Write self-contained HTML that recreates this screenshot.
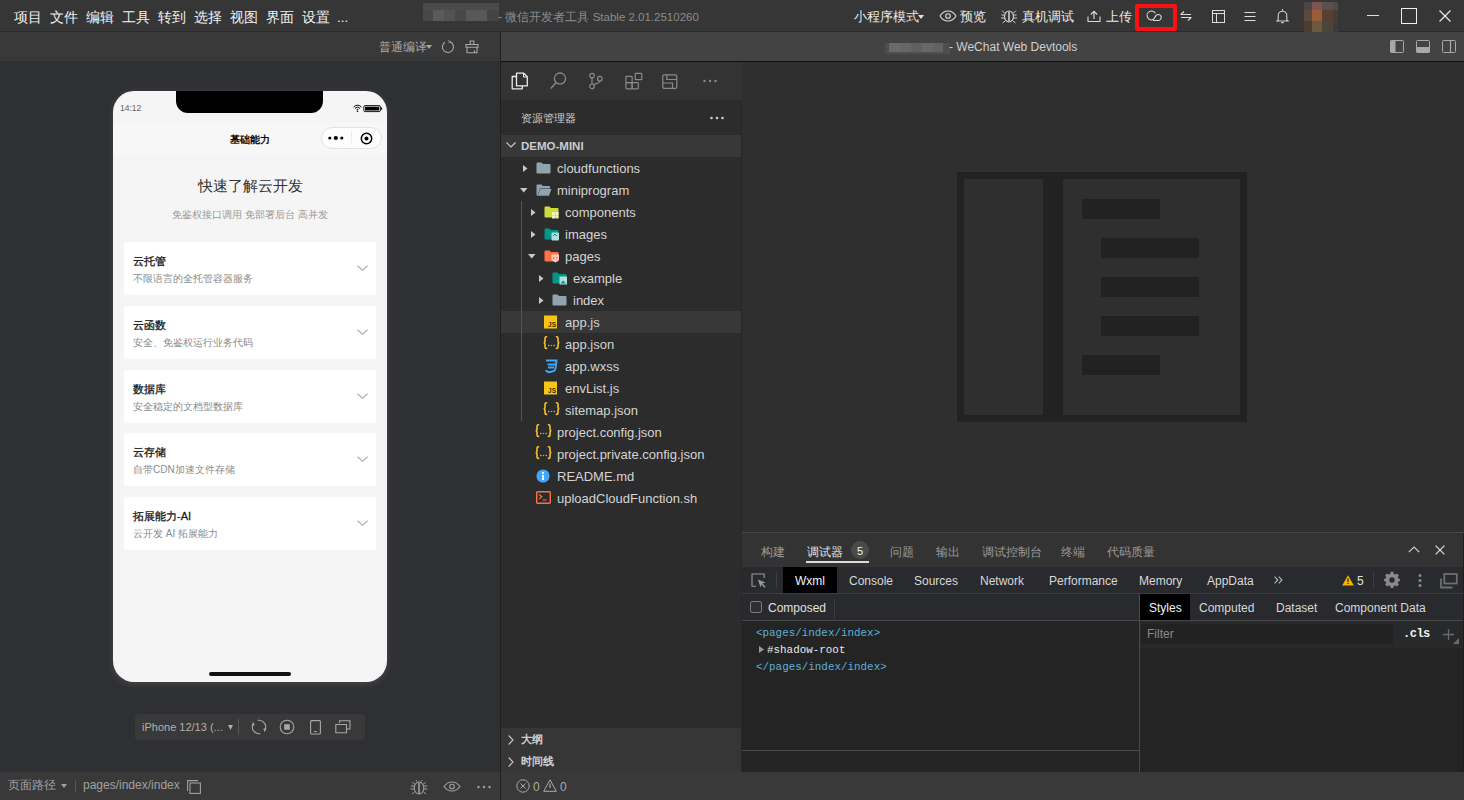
<!DOCTYPE html>
<html><head><meta charset="utf-8">
<style>
*{margin:0;padding:0;box-sizing:border-box}
html,body{width:1464px;height:800px;overflow:hidden;background:#2c2c2c;font-family:"Liberation Sans",sans-serif;color:#ccc}
.a{position:absolute}
.t{position:absolute;white-space:nowrap;line-height:1}
svg{position:absolute;overflow:visible}
</style></head><body>
<!-- TOP BAR -->
<div class="a" style="left:0;top:0;width:1464px;height:32px;background:#363636;border-bottom:1px solid #2a2a2a"></div>
<div class="t" style="left:14px;top:10.5px;font-size:13.5px;color:#f2f2f2">项目</div>
<div class="t" style="left:50px;top:10.5px;font-size:13.5px;color:#f2f2f2">文件</div>
<div class="t" style="left:86px;top:10.5px;font-size:13.5px;color:#f2f2f2">编辑</div>
<div class="t" style="left:122px;top:10.5px;font-size:13.5px;color:#f2f2f2">工具</div>
<div class="t" style="left:158px;top:10.5px;font-size:13.5px;color:#f2f2f2">转到</div>
<div class="t" style="left:194px;top:10.5px;font-size:13.5px;color:#f2f2f2">选择</div>
<div class="t" style="left:230px;top:10.5px;font-size:13.5px;color:#f2f2f2">视图</div>
<div class="t" style="left:266px;top:10.5px;font-size:13.5px;color:#f2f2f2">界面</div>
<div class="t" style="left:302px;top:10.5px;font-size:13.5px;color:#f2f2f2">设置</div>
<div class="t" style="left:337px;top:10.5px;font-size:13.5px;color:#f2f2f2">...</div>
<!-- blurred title -->
<div class="a" style="left:423px;top:3px;width:76px;height:7px;background:#4b4b4b"></div>
<div class="a" style="left:423px;top:10px;width:10px;height:11px;background:#444a4a"></div>
<div class="a" style="left:433px;top:10px;width:11px;height:11px;background:#5c5b58"></div>
<div class="a" style="left:444px;top:10px;width:11px;height:11px;background:#535353"></div>
<div class="a" style="left:455px;top:10px;width:11px;height:11px;background:#4a4846"></div>
<div class="a" style="left:466px;top:10px;width:21px;height:11px;background:#595857"></div>
<div class="a" style="left:487px;top:10px;width:12px;height:11px;background:#444444"></div>
<div class="t" style="left:498px;top:10.5px;font-size:12px;color:#8c8c8c">- 微信开发者工具 <span style="font-size:11.5px">Stable 2.01.2510260</span></div>
<!-- right tools -->
<div class="t" style="left:854px;top:10.5px;font-size:12.5px;color:#eaeaea">小程序模式</div>
<svg style="left:918px;top:15px" width="6" height="4"><path d="M0 0H6L3 4Z" fill="#e0e0e0"/></svg>
<svg style="left:939px;top:10px" width="18" height="12" viewBox="0 0 18 12"><path d="M1 6C3.5 2 6 1 9 1S14.5 2 17 6C14.5 10 12 11 9 11S3.5 10 1 6Z" fill="none" stroke="#dcdcdc" stroke-width="1.1"/><circle cx="9" cy="6" r="2.3" fill="none" stroke="#dcdcdc" stroke-width="1.1"/></svg>
<div class="t" style="left:960px;top:10.5px;font-size:12.5px;color:#eaeaea">预览</div>
<svg style="left:1000px;top:9px" width="18" height="14" viewBox="0 0 18 14"><ellipse cx="9" cy="7.5" rx="4.5" ry="5.5" fill="none" stroke="#d0d0d0" stroke-width="1.2"/><path d="M9 2.5V12.5" stroke="#d0d0d0" stroke-width="1.6"/><path d="M4.5 6H1.5M4.5 9H1M4.5 4L2 1.5M13.5 6H16.5M13.5 9H17M13.5 4L16 1.5M5 12L2.5 14M13 12L15.5 14" stroke="#d0d0d0" stroke-width="1"/></svg>
<div class="t" style="left:1022px;top:10.5px;font-size:12.5px;color:#eaeaea">真机调试</div>
<svg style="left:1087px;top:10px" width="14" height="13" viewBox="0 0 14 13"><path d="M1 6.5V11.5H13V6.5" fill="none" stroke="#d8d8d8" stroke-width="1.1"/><path d="M7 9V1.5M3.8 4.5L7 1.3L10.2 4.5" fill="none" stroke="#d8d8d8" stroke-width="1.2"/></svg>
<div class="t" style="left:1106px;top:10.5px;font-size:12.5px;color:#eaeaea">上传</div>
<div class="a" style="left:1135px;top:4px;width:42px;height:27px;border:4px solid #ff0f0f;border-radius:2px"></div>
<svg style="left:1146px;top:10px" width="17" height="12" viewBox="0 0 17 12"><path d="M9.3 3.3A4.4 4.4 0 1 0 7.6 9.3L9.9 5.6A3 3 0 1 1 12 10.5H7.2" fill="none" stroke="#dcdcdc" stroke-width="1.1"/></svg>
<svg style="left:1180px;top:11px" width="12" height="10" viewBox="0 0 12 10"><path d="M0.5 3.5H11M4 0.5L0.8 3.5M11.5 6.5H1M8 9.5L11.2 6.5" fill="none" stroke="#dcdcdc" stroke-width="1.1"/></svg>
<svg style="left:1212px;top:10px" width="13" height="13" viewBox="0 0 13 13"><rect x="0.5" y="0.5" width="12" height="12" fill="none" stroke="#dcdcdc" stroke-width="1"/><path d="M0.5 3.5H12.5M4.5 3.5V12.5" stroke="#dcdcdc" stroke-width="1"/></svg>
<svg style="left:1244px;top:11px" width="12" height="11" viewBox="0 0 12 11"><path d="M0.5 1.5H11.5M0.5 5.5H11.5M0.5 9.5H11.5" stroke="#dcdcdc" stroke-width="1"/></svg>
<svg style="left:1276px;top:8px" width="13" height="16" viewBox="0 0 13 16"><path d="M6.5 1V2.5M2.2 12V7.5A4.3 4.3 0 0 1 10.8 7.5V12L12 13H1L2.2 12Z" fill="none" stroke="#d0d0d0" stroke-width="1.1"/><path d="M5.3 14.6H7.7" stroke="#d0d0d0" stroke-width="1.3"/></svg>
<!-- avatar pixelated -->
<div class="a" style="left:1304px;top:2px;width:34px;height:30px;display:grid;grid-template-columns:8px 10px 11px 5px;grid-template-rows:8px 11px 11px">
<i style="background:#4a4544"></i><i style="background:#7e5450"></i><i style="background:#5a504f"></i><i style="background:#4d4b4b"></i>
<i style="background:#5a4a3a"></i><i style="background:#9a5c3a"></i><i style="background:#5a3e30"></i><i style="background:#433d38"></i>
<i style="background:#4a3c32"></i><i style="background:#6c5a40"></i><i style="background:#4b4538"></i><i style="background:#3b3b3b"></i>
</div>
<div class="a" style="left:1367px;top:15px;width:12px;height:1px;background:#e0e0e0"></div>
<div class="a" style="left:1401px;top:8px;width:16px;height:16px;border:1.5px solid #f0f0f0"></div>
<svg style="left:1439px;top:10px" width="12" height="12" viewBox="0 0 12 12"><path d="M0.5 0.5L11.5 11.5M11.5 0.5L0.5 11.5" stroke="#e8e8e8" stroke-width="1.2"/></svg>
<!-- LEFT SIM PANEL -->
<div class="a" style="left:0;top:32px;width:500px;height:29px;background:#393939"></div>
<div class="a" style="left:0;top:61px;width:500px;height:711px;background:#2f3033"></div>
<div class="a" style="left:0;top:772px;width:500px;height:28px;background:#393939"></div>
<div class="a" style="left:500px;top:32px;width:1px;height:768px;background:#1f1f1f"></div>
<div class="t" style="left:378.5px;top:41.5px;font-size:11.5px;color:#a8a8a8">普通编译</div>
<svg style="left:426px;top:45px" width="6" height="4"><path d="M0 0H6L3 4Z" fill="#a8a8a8"/></svg>
<svg style="left:441px;top:40px" width="14" height="14" viewBox="0 0 14 14"><path d="M8.6 1.6A5.6 5.6 0 1 1 4 2.2" fill="none" stroke="#a8a8a8" stroke-width="1.1"/><path d="M7.3 0.2L8.8 1.6L7.4 3" fill="none" stroke="#a8a8a8" stroke-width="1"/></svg>
<svg style="left:465px;top:40px" width="14" height="14" viewBox="0 0 14 14"><path d="M5.2 4.5V1H8.8V4.5M1 4.5H13V7.3H1ZM2 7.3V12.8H12V7.3M9.5 10.5V12.8" fill="none" stroke="#a8a8a8" stroke-width="1.1"/></svg>
<!-- PHONE -->
<div class="a" style="left:113px;top:91px;width:274px;height:591px;background:#f5f5f5;border-radius:21px;box-shadow:0 2px 7px rgba(160,160,160,0.22);overflow:hidden">
 <div class="a" style="left:63px;top:0;width:147px;height:22px;background:#000;border-radius:0 0 12px 12px"></div>
 <div class="t" style="left:7px;top:13px;font-size:8.5px;color:#666">14:12</div>
 <svg style="left:240px;top:14px" width="30" height="7" viewBox="0 0 30 7"><path d="M0.5 2.2A5 5 0 0 1 8.5 2.2M2 3.6A3 3 0 0 1 7 3.6M3.4 5A1.3 1.3 0 0 1 5.6 5" fill="none" stroke="#000" stroke-width="1"/><circle cx="4.5" cy="6.2" r="0.8" fill="#000"/><rect x="10.8" y="0.6" width="16.6" height="6" rx="1.3" fill="none" stroke="#000" stroke-width="0.9"/><rect x="12" y="1.7" width="14.2" height="3.8" fill="#000"/><rect x="27.8" y="2.5" width="1.3" height="2.2" fill="#000"/></svg>
 <div class="a" style="left:0;top:32px;width:274px;height:31px;background:#f7f7f7"></div>
 <div class="t" style="left:0;top:44px;width:274px;text-align:center;font-size:9.5px;color:#000;-webkit-text-stroke:0.35px #000">基础能力</div>
 <div class="a" style="left:208px;top:36px;width:61px;height:22px;border:1px solid #e3e3e3;border-radius:11px;background:#fdfdfd"></div>
 <svg style="left:215px;top:44px" width="16" height="6" viewBox="0 0 16 6"><circle cx="1.8" cy="3" r="1.6" fill="#000"/><circle cx="7.8" cy="3" r="2.1" fill="#000"/><circle cx="13.8" cy="3" r="1.6" fill="#000"/></svg>
 <div class="a" style="left:238px;top:40px;width:1px;height:14px;background:#eeeeee"></div>
 <svg style="left:247px;top:41px" width="13" height="13" viewBox="0 0 13 13"><circle cx="6.5" cy="6.5" r="5.2" fill="none" stroke="#000" stroke-width="1.5"/><circle cx="6.5" cy="6.5" r="2" fill="#000"/></svg>
 <div class="t" style="left:0;top:87px;width:274px;text-align:center;font-size:15px;color:#333">快速了解云开发</div>
 <div class="t" style="left:0;top:119px;width:274px;text-align:center;font-size:10px;color:#999">免鉴权接口调用 免部署后台 高并发</div>
 <div class="a" style="left:11px;top:151px;width:252px;height:53px;background:#fff;border-radius:3px">
  <div class="t" style="left:9px;top:13.5px;font-size:11px;color:#1a1a1a;-webkit-text-stroke:0.3px #1a1a1a">云托管</div>
  <div class="t" style="left:9px;top:32px;font-size:10px;color:#8a8a8a">不限语言的全托管容器服务</div>
  <svg style="left:233px;top:23px" width="11" height="6" viewBox="0 0 11 6"><path d="M0.5 0.8L5.5 5.3L10.5 0.8" fill="none" stroke="#b0b0b0" stroke-width="1.2"/></svg>
 </div>
 <div class="a" style="left:11px;top:215px;width:252px;height:53px;background:#fff;border-radius:3px">
  <div class="t" style="left:9px;top:13.5px;font-size:11px;color:#1a1a1a;-webkit-text-stroke:0.3px #1a1a1a">云函数</div>
  <div class="t" style="left:9px;top:32px;font-size:10px;color:#8a8a8a">安全、免鉴权运行业务代码</div>
  <svg style="left:233px;top:23px" width="11" height="6" viewBox="0 0 11 6"><path d="M0.5 0.8L5.5 5.3L10.5 0.8" fill="none" stroke="#b0b0b0" stroke-width="1.2"/></svg>
 </div>
 <div class="a" style="left:11px;top:279px;width:252px;height:53px;background:#fff;border-radius:3px">
  <div class="t" style="left:9px;top:13.5px;font-size:11px;color:#1a1a1a;-webkit-text-stroke:0.3px #1a1a1a">数据库</div>
  <div class="t" style="left:9px;top:32px;font-size:10px;color:#8a8a8a">安全稳定的文档型数据库</div>
  <svg style="left:233px;top:23px" width="11" height="6" viewBox="0 0 11 6"><path d="M0.5 0.8L5.5 5.3L10.5 0.8" fill="none" stroke="#b0b0b0" stroke-width="1.2"/></svg>
 </div>
 <div class="a" style="left:11px;top:342px;width:252px;height:53px;background:#fff;border-radius:3px">
  <div class="t" style="left:9px;top:13.5px;font-size:11px;color:#1a1a1a;-webkit-text-stroke:0.3px #1a1a1a">云存储</div>
  <div class="t" style="left:9px;top:32px;font-size:10px;color:#8a8a8a">自带CDN加速文件存储</div>
  <svg style="left:233px;top:23px" width="11" height="6" viewBox="0 0 11 6"><path d="M0.5 0.8L5.5 5.3L10.5 0.8" fill="none" stroke="#b0b0b0" stroke-width="1.2"/></svg>
 </div>
 <div class="a" style="left:11px;top:406px;width:252px;height:53px;background:#fff;border-radius:3px">
  <div class="t" style="left:9px;top:13.5px;font-size:11px;color:#1a1a1a;-webkit-text-stroke:0.3px #1a1a1a">拓展能力-AI</div>
  <div class="t" style="left:9px;top:32px;font-size:10px;color:#8a8a8a">云开发 AI 拓展能力</div>
  <svg style="left:233px;top:23px" width="11" height="6" viewBox="0 0 11 6"><path d="M0.5 0.8L5.5 5.3L10.5 0.8" fill="none" stroke="#b0b0b0" stroke-width="1.2"/></svg>
 </div>
 <div class="a" style="left:96px;top:581px;width:82px;height:4px;background:#111;border-radius:2px"></div>
</div>
<!-- device toolbar -->
<div class="a" style="left:135px;top:714px;width:230px;height:26px;background:#393939;border-radius:3px"></div>
<div class="t" style="left:142px;top:722px;font-size:11px;color:#b0b0b0">iPhone 12/13 (...</div>
<svg style="left:228px;top:725px" width="5" height="5"><path d="M0 0H5L2.5 5Z" fill="#b0b0b0"/></svg>
<div class="a" style="left:238px;top:719px;width:1px;height:16px;background:#555"></div>
<svg style="left:252px;top:720px" width="15" height="15" viewBox="0 0 15 15"><path d="M5.84 0.4A6.7 6.7 0 0 1 13.2 9.5M8.16 13.6A6.7 6.7 0 0 1 0.8 4.5" fill="none" stroke="#a8a8a8" stroke-width="1.1"/><path d="M11.3 8.6H14.4L12.7 12.2ZM2.7 5.4H-0.4L1.3 1.8Z" fill="#a8a8a8"/></svg>
<svg style="left:279px;top:719px" width="16" height="16" viewBox="0 0 16 16"><circle cx="8" cy="8" r="6.8" fill="none" stroke="#a8a8a8" stroke-width="1.1"/><rect x="5.2" y="5.2" width="5.6" height="5.6" rx="0.5" fill="#a8a8a8"/></svg>
<svg style="left:310px;top:720px" width="11" height="15" viewBox="0 0 11 15"><rect x="0.6" y="0.6" width="9.8" height="13.4" rx="1" fill="none" stroke="#a8a8a8" stroke-width="1.1"/><path d="M4 11.5H7" stroke="#a8a8a8" stroke-width="1"/></svg>
<svg style="left:335px;top:720px" width="16" height="14" viewBox="0 0 16 14"><path d="M4.5 3V0.8H15V9H12M0.8 4.5H11.5V12.8H0.8Z" fill="none" stroke="#a8a8a8" stroke-width="1.1"/></svg>
<!-- status bar left -->
<div class="t" style="left:8px;top:779px;font-size:12px;color:#a0a0a0">页面路径</div>
<svg style="left:61px;top:784px" width="6" height="4"><path d="M0 0H6L3 4Z" fill="#a0a0a0"/></svg>
<div class="a" style="left:75px;top:780px;width:1px;height:12px;background:#555"></div>
<div class="t" style="left:83px;top:779px;font-size:12px;color:#a0a0a0">pages/index/index</div>
<svg style="left:187px;top:780px" width="14" height="14" viewBox="0 0 14 14"><path d="M0.6 11V0.6H11" fill="none" stroke="#a0a0a0" stroke-width="1.1"/><rect x="3" y="3" width="10.4" height="10.4" fill="none" stroke="#a0a0a0" stroke-width="1.1"/></svg>
<svg style="left:410px;top:779px" width="18" height="16" viewBox="0 0 18 16"><ellipse cx="9" cy="9" rx="4.8" ry="6" fill="none" stroke="#a0a0a0" stroke-width="1.1"/><path d="M9 3.5V15" stroke="#a0a0a0" stroke-width="1.6"/><path d="M7 2.5L6 1M11 2.5L12 1M4.2 7H1M4.2 10H0.5M4.5 13L2 15M13.8 7H17M13.8 10H17.5M13.5 13L16 15M4.7 5L2.5 3.5M13.3 5L15.5 3.5" stroke="#a0a0a0" stroke-width="1"/></svg>
<svg style="left:443px;top:781px" width="18" height="11" viewBox="0 0 18 11"><path d="M1 5.5C3.5 2 6 1 9 1S14.5 2 17 5.5C14.5 9 12 10 9 10S3.5 9 1 5.5Z" fill="none" stroke="#a0a0a0" stroke-width="1.1"/><circle cx="9" cy="5.5" r="2.3" fill="none" stroke="#a0a0a0" stroke-width="1.1"/></svg>
<svg style="left:477px;top:785px" width="14" height="4" viewBox="0 0 14 4"><circle cx="1.5" cy="2" r="1.2" fill="#a0a0a0"/><circle cx="7" cy="2" r="1.2" fill="#a0a0a0"/><circle cx="12.5" cy="2" r="1.2" fill="#a0a0a0"/></svg>
<!-- RIGHT -->
<div class="a" style="left:501px;top:32px;width:963px;height:29px;background:#434343"></div>
<div class="a" style="left:501px;top:61px;width:963px;height:1px;background:#111111"></div>
<div class="a" style="left:885px;top:43px;width:65px;height:11px;background:#4e4e4e"></div>
<div class="a" style="left:889px;top:43px;width:11px;height:9px;background:#6a6a6a"></div>
<div class="a" style="left:900px;top:43px;width:11px;height:9px;background:#666666"></div>
<div class="a" style="left:911px;top:43px;width:11px;height:9px;background:#606060"></div>
<div class="a" style="left:922px;top:43px;width:11px;height:9px;background:#676767"></div>
<div class="a" style="left:933px;top:43px;width:10px;height:9px;background:#626262"></div>
<div class="t" style="left:949px;top:41px;font-size:12px;color:#d0d0d0">- WeChat Web Devtools</div>
<svg style="left:1390px;top:40px" width="14" height="13" viewBox="0 0 14 13"><rect x="0.5" y="0.5" width="13" height="12" rx="1" fill="none" stroke="#a8a8a8" stroke-width="1"/><rect x="0.5" y="0.5" width="5" height="12" fill="#a8a8a8"/></svg>
<svg style="left:1416px;top:40px" width="14" height="13" viewBox="0 0 14 13"><rect x="0.5" y="0.5" width="13" height="12" rx="1" fill="none" stroke="#a8a8a8" stroke-width="1"/><rect x="0.5" y="7" width="13" height="5.5" fill="#a8a8a8"/></svg>
<svg style="left:1442px;top:40px" width="14" height="13" viewBox="0 0 14 13"><rect x="0.5" y="0.5" width="13" height="12" rx="1" fill="none" stroke="#a8a8a8" stroke-width="1"/><path d="M8.5 0.5V12.5" stroke="#a8a8a8" stroke-width="1.2"/></svg>

<!-- activity bar -->
<div class="a" style="left:501px;top:62px;width:241px;height:38px;background:#333333"></div>
<svg style="left:511px;top:72px" width="18" height="18" viewBox="0 0 18 18"><path d="M5.5 4.5H1.2V16.8H11.3V13.8" fill="none" stroke="#ececec" stroke-width="1.3" stroke-linejoin="round"/><path d="M5.5 1.2H12.8L16.3 4.7V13.8H5.5Z" fill="none" stroke="#ececec" stroke-width="1.3" stroke-linejoin="round"/><path d="M12.5 1.5V5H16" fill="none" stroke="#ececec" stroke-width="1"/></svg>
<svg style="left:550px;top:72px" width="17" height="18" viewBox="0 0 17 18"><circle cx="10" cy="6.6" r="5.6" fill="none" stroke="#8a8a8a" stroke-width="1.3"/><path d="M6 10.8L0.8 16.5" stroke="#8a8a8a" stroke-width="1.4"/></svg>
<svg style="left:588px;top:72px" width="16" height="18" viewBox="0 0 16 18"><circle cx="4" cy="3.6" r="2.3" fill="none" stroke="#8a8a8a" stroke-width="1.2"/><circle cx="4" cy="14.3" r="2.3" fill="none" stroke="#8a8a8a" stroke-width="1.2"/><circle cx="11.8" cy="6.7" r="2.3" fill="none" stroke="#8a8a8a" stroke-width="1.2"/><path d="M4 5.9V12M11.8 9C11.8 11 9 11.5 5.5 12.5" fill="none" stroke="#8a8a8a" stroke-width="1.2"/></svg>
<svg style="left:625px;top:72px" width="18" height="18" viewBox="0 0 18 18"><rect x="0.9" y="4.4" width="6.2" height="6.2" rx="0.8" fill="none" stroke="#8a8a8a" stroke-width="1.2"/><rect x="0.9" y="10.6" width="6.2" height="6.2" rx="0.8" fill="none" stroke="#8a8a8a" stroke-width="1.2"/><rect x="7.1" y="10.6" width="6.2" height="6.2" rx="0.8" fill="none" stroke="#8a8a8a" stroke-width="1.2"/><rect x="10.2" y="1.3" width="6.6" height="6.4" rx="0.8" fill="none" stroke="#8a8a8a" stroke-width="1.2"/></svg>
<svg style="left:662px;top:74px" width="16" height="16" viewBox="0 0 16 16"><rect x="0.8" y="0.8" width="14" height="13.6" rx="1.5" fill="none" stroke="#8a8a8a" stroke-width="1.2"/><path d="M4.8 1V5.5H14.8M0.8 9H10.5V14.4" fill="none" stroke="#8a8a8a" stroke-width="1.2"/></svg>
<svg style="left:703px;top:79px" width="14" height="4" viewBox="0 0 14 4"><circle cx="1.5" cy="2" r="1.2" fill="#8a8a8a"/><circle cx="7" cy="2" r="1.2" fill="#8a8a8a"/><circle cx="12.5" cy="2" r="1.2" fill="#8a8a8a"/></svg>

<!-- explorer -->
<div class="a" style="left:501px;top:100px;width:240px;height:628px;background:#2c2c2c"></div>
<div class="t" style="left:521px;top:113px;font-size:11px;color:#cfcfcf">资源管理器</div>
<svg style="left:710px;top:116px" width="14" height="4" viewBox="0 0 14 4"><circle cx="1.5" cy="2" r="1.3" fill="#cfcfcf"/><circle cx="7" cy="2" r="1.3" fill="#cfcfcf"/><circle cx="12.5" cy="2" r="1.3" fill="#cfcfcf"/></svg>
<div class="a" style="left:501px;top:135px;width:240px;height:22px;background:#383838"></div>
<svg style="left:506px;top:142px" width="10" height="6" viewBox="0 0 10 6"><path d="M0.5 0.5L5 5L9.5 0.5" fill="none" stroke="#c8c8c8" stroke-width="1.2"/></svg>
<div class="t" style="left:521px;top:141px;font-size:11.5px;color:#cccccc;font-weight:bold">DEMO-MINI</div>
<div class="a" style="left:501px;top:311px;width:240px;height:22px;background:#383838"></div>
<div class="a" style="left:521px;top:201px;width:1px;height:220px;background:#555"></div>
<svg style="left:523px;top:165px" width="5" height="8"><path d="M0 0V7L4.5 3.5Z" fill="#c8c8c8"/></svg><svg style="left:536px;top:162px" width="16" height="13" viewBox="0 0 16 13"><path d="M0.5 1.5Q0.5 0.5 1.5 0.5H5.5L7 2H13.5Q14.5 2 14.5 3V10.5Q14.5 11.5 13.5 11.5H1.5Q0.5 11.5 0.5 10.5Z" fill="#90a4ae"/></svg><div class="t" style="left:557px;top:162px;font-size:13px;color:#d4d4d4">cloudfunctions</div><svg style="left:520px;top:188px" width="8" height="5"><path d="M0 0H7.5L3.75 4.5Z" fill="#c8c8c8"/></svg><svg style="left:536px;top:184px" width="16" height="13" viewBox="0 0 16 13"><path d="M0.5 1.5Q0.5 0.5 1.5 0.5H5.5L7 2H13Q14 2 14 3V4.5H4L1.5 11.5H0.5Z" fill="#90a4ae"/><path d="M4.3 5H15.5L13 11.8H1.6Z" fill="#90a4ae"/></svg><div class="t" style="left:557px;top:184px;font-size:13px;color:#d4d4d4">miniprogram</div><svg style="left:531px;top:209px" width="5" height="8"><path d="M0 0V7L4.5 3.5Z" fill="#c8c8c8"/></svg><svg style="left:544px;top:206px" width="16" height="13" viewBox="0 0 16 13"><path d="M0.5 1.5Q0.5 0.5 1.5 0.5H5.5L7 2H13.5Q14.5 2 14.5 3V10.5Q14.5 11.5 13.5 11.5H1.5Q0.5 11.5 0.5 10.5Z" fill="#cddc39"/><rect x="8" y="6" width="3" height="3" fill="#f0f4c3"/><rect x="11.5" y="6" width="3" height="3" fill="#f0f4c3"/><rect x="8" y="9.5" width="3" height="3" fill="#f0f4c3"/><rect x="11.5" y="9.5" width="3" height="3" fill="#f0f4c3"/></svg><div class="t" style="left:565px;top:206px;font-size:13px;color:#d4d4d4">components</div><svg style="left:531px;top:231px" width="5" height="8"><path d="M0 0V7L4.5 3.5Z" fill="#c8c8c8"/></svg><svg style="left:544px;top:228px" width="16" height="13" viewBox="0 0 16 13"><path d="M0.5 1.5Q0.5 0.5 1.5 0.5H5.5L7 2H13.5Q14.5 2 14.5 3V10.5Q14.5 11.5 13.5 11.5H1.5Q0.5 11.5 0.5 10.5Z" fill="#009688"/><rect x="7.5" y="4.5" width="7.5" height="8" rx="1" fill="#b2dfdb"/><path d="M9 8L11 6L13 8" stroke="#009688" stroke-width="1" fill="none"/></svg><div class="t" style="left:565px;top:228px;font-size:13px;color:#d4d4d4">images</div><svg style="left:528px;top:254px" width="8" height="5"><path d="M0 0H7.5L3.75 4.5Z" fill="#c8c8c8"/></svg><svg style="left:544px;top:250px" width="16" height="13" viewBox="0 0 16 13"><path d="M0.5 1.5Q0.5 0.5 1.5 0.5H5.5L7 2H13.5Q14.5 2 14.5 3V10.5Q14.5 11.5 13.5 11.5H1.5Q0.5 11.5 0.5 10.5Z" fill="#ff7043"/><path d="M7.5 4.5H15V10L11.25 12.5L7.5 10Z" fill="#ffccbc"/><path d="M10.3 6.8L9.2 8L10.3 9.2M12.2 6.8L13.3 8L12.2 9.2" stroke="#ff5722" stroke-width="0.9" fill="none"/></svg><div class="t" style="left:565px;top:250px;font-size:13px;color:#d4d4d4">pages</div><svg style="left:539px;top:275px" width="5" height="8"><path d="M0 0V7L4.5 3.5Z" fill="#c8c8c8"/></svg><svg style="left:552px;top:272px" width="16" height="13" viewBox="0 0 16 13"><path d="M0.5 1.5Q0.5 0.5 1.5 0.5H5.5L7 2H13.5Q14.5 2 14.5 3V10.5Q14.5 11.5 13.5 11.5H1.5Q0.5 11.5 0.5 10.5Z" fill="#009688"/><rect x="7.5" y="4.5" width="7.5" height="8" fill="#b2dfdb"/><path d="M8.5 11.5L11 8.5L14 11.5Z" fill="#009688"/></svg><div class="t" style="left:573px;top:272px;font-size:13px;color:#d4d4d4">example</div><svg style="left:539px;top:297px" width="5" height="8"><path d="M0 0V7L4.5 3.5Z" fill="#c8c8c8"/></svg><svg style="left:552px;top:294px" width="16" height="13" viewBox="0 0 16 13"><path d="M0.5 1.5Q0.5 0.5 1.5 0.5H5.5L7 2H13.5Q14.5 2 14.5 3V10.5Q14.5 11.5 13.5 11.5H1.5Q0.5 11.5 0.5 10.5Z" fill="#90a4ae"/></svg><div class="t" style="left:573px;top:294px;font-size:13px;color:#d4d4d4">index</div><svg style="left:544px;top:315px" width="14" height="14" viewBox="0 0 14 14"><rect x="0" y="0.5" width="13" height="13" fill="#f5c518"/><text x="12" y="12" font-family="Liberation Sans" font-size="6.5" font-weight="bold" fill="#3a3000" text-anchor="end">JS</text></svg><div class="t" style="left:565px;top:316px;font-size:13px;color:#d4d4d4">app.js</div><svg style="left:543px;top:336px" width="17" height="14" viewBox="0 0 17 14"><path d="M4.2 0.8H3.4Q2 0.8 2 2.2V5.2Q2 6.6 0.6 6.6Q2 6.6 2 8V11Q2 12.4 3.4 12.4H4.2M12.8 0.8H13.6Q15 0.8 15 2.2V5.2Q15 6.6 16.4 6.6Q15 6.6 15 8V11Q15 12.4 13.6 12.4H12.8" fill="none" stroke="#f9c12e" stroke-width="1.6"/><circle cx="5.8" cy="9.4" r="0.75" fill="#f9c12e"/><circle cx="8.5" cy="9.4" r="0.75" fill="#d9a52a"/><circle cx="11.2" cy="9.4" r="0.75" fill="#f9c12e"/></svg><div class="t" style="left:565px;top:338px;font-size:13px;color:#d4d4d4">app.json</div><svg style="left:544px;top:359px" width="14" height="14" viewBox="0 0 14 14"><path d="M2 1.5H12.5L11.5 9.5Q11.3 11.5 9 12.3L5 13.2Q2.5 12.8 2 11" fill="none" stroke="#42a5f5" stroke-width="2"/><path d="M3.5 5.5H11M4 8.5H10" stroke="#42a5f5" stroke-width="1.8"/></svg><div class="t" style="left:565px;top:360px;font-size:13px;color:#d4d4d4">app.wxss</div><svg style="left:544px;top:381px" width="14" height="14" viewBox="0 0 14 14"><rect x="0" y="0.5" width="13" height="13" fill="#f5c518"/><text x="12" y="12" font-family="Liberation Sans" font-size="6.5" font-weight="bold" fill="#3a3000" text-anchor="end">JS</text></svg><div class="t" style="left:565px;top:382px;font-size:13px;color:#d4d4d4">envList.js</div><svg style="left:543px;top:402px" width="17" height="14" viewBox="0 0 17 14"><path d="M4.2 0.8H3.4Q2 0.8 2 2.2V5.2Q2 6.6 0.6 6.6Q2 6.6 2 8V11Q2 12.4 3.4 12.4H4.2M12.8 0.8H13.6Q15 0.8 15 2.2V5.2Q15 6.6 16.4 6.6Q15 6.6 15 8V11Q15 12.4 13.6 12.4H12.8" fill="none" stroke="#f9c12e" stroke-width="1.6"/><circle cx="5.8" cy="9.4" r="0.75" fill="#f9c12e"/><circle cx="8.5" cy="9.4" r="0.75" fill="#d9a52a"/><circle cx="11.2" cy="9.4" r="0.75" fill="#f9c12e"/></svg><div class="t" style="left:565px;top:404px;font-size:13px;color:#d4d4d4">sitemap.json</div><svg style="left:535px;top:424px" width="17" height="14" viewBox="0 0 17 14"><path d="M4.2 0.8H3.4Q2 0.8 2 2.2V5.2Q2 6.6 0.6 6.6Q2 6.6 2 8V11Q2 12.4 3.4 12.4H4.2M12.8 0.8H13.6Q15 0.8 15 2.2V5.2Q15 6.6 16.4 6.6Q15 6.6 15 8V11Q15 12.4 13.6 12.4H12.8" fill="none" stroke="#f9c12e" stroke-width="1.6"/><circle cx="5.8" cy="9.4" r="0.75" fill="#f9c12e"/><circle cx="8.5" cy="9.4" r="0.75" fill="#d9a52a"/><circle cx="11.2" cy="9.4" r="0.75" fill="#f9c12e"/></svg><div class="t" style="left:557px;top:426px;font-size:13px;color:#d4d4d4">project.config.json</div><svg style="left:535px;top:446px" width="17" height="14" viewBox="0 0 17 14"><path d="M4.2 0.8H3.4Q2 0.8 2 2.2V5.2Q2 6.6 0.6 6.6Q2 6.6 2 8V11Q2 12.4 3.4 12.4H4.2M12.8 0.8H13.6Q15 0.8 15 2.2V5.2Q15 6.6 16.4 6.6Q15 6.6 15 8V11Q15 12.4 13.6 12.4H12.8" fill="none" stroke="#f9c12e" stroke-width="1.6"/><circle cx="5.8" cy="9.4" r="0.75" fill="#f9c12e"/><circle cx="8.5" cy="9.4" r="0.75" fill="#d9a52a"/><circle cx="11.2" cy="9.4" r="0.75" fill="#f9c12e"/></svg><div class="t" style="left:557px;top:448px;font-size:13px;color:#d4d4d4">project.private.config.json</div><svg style="left:536px;top:469px" width="14" height="14" viewBox="0 0 14 14"><circle cx="7" cy="7" r="6.6" fill="#42a5f5"/><rect x="6.1" y="6" width="1.8" height="5" fill="#fff"/><circle cx="7" cy="3.9" r="1.05" fill="#fff"/></svg><div class="t" style="left:557px;top:470px;font-size:13px;color:#d4d4d4">README.md</div><svg style="left:536px;top:491px" width="15" height="13" viewBox="0 0 15 13"><rect x="0.7" y="0.7" width="13.6" height="11.6" rx="1" fill="none" stroke="#ff7043" stroke-width="1.4"/><path d="M3 3.5L5.8 5.8L3 8.1M6.5 9H10.5" fill="none" stroke="#ff7043" stroke-width="1.2"/></svg><div class="t" style="left:557px;top:492px;font-size:13px;color:#d4d4d4">uploadCloudFunction.sh</div>
<div class="a" style="left:501px;top:728px;width:240px;height:44px;background:#363636"></div>
<svg style="left:508px;top:735px" width="6" height="10" viewBox="0 0 6 10"><path d="M0.7 0.5L5 5L0.7 9.5" fill="none" stroke="#c8c8c8" stroke-width="1.1"/></svg>
<div class="t" style="left:521px;top:734px;font-size:11px;color:#d0d0d0;font-weight:bold">大纲</div>
<svg style="left:508px;top:757px" width="6" height="10" viewBox="0 0 6 10"><path d="M0.7 0.5L5 5L0.7 9.5" fill="none" stroke="#c8c8c8" stroke-width="1.1"/></svg>
<div class="t" style="left:521px;top:756px;font-size:11px;color:#d0d0d0;font-weight:bold">时间线</div>
<div class="a" style="left:501px;top:772px;width:963px;height:28px;background:#393939"></div>
<!-- right status -->
<svg style="left:516px;top:779px" width="14" height="14" viewBox="0 0 14 14"><circle cx="7" cy="7" r="6.2" fill="none" stroke="#aaa" stroke-width="1"/><path d="M4.5 4.5L9.5 9.5M9.5 4.5L4.5 9.5" stroke="#aaa" stroke-width="1"/></svg>
<div class="t" style="left:533px;top:781px;font-size:12px;color:#aaa">0</div>
<svg style="left:543px;top:779px" width="14" height="13" viewBox="0 0 14 13"><path d="M7 0.8L13.3 12.3H0.7Z" fill="none" stroke="#aaa" stroke-width="1"/><path d="M7 4.5V9" stroke="#aaa" stroke-width="1.2"/></svg>
<div class="t" style="left:560px;top:781px;font-size:12px;color:#aaa">0</div>

<!-- editor -->
<div class="a" style="left:741px;top:100px;width:1px;height:672px;background:#272727"></div>
<div class="a" style="left:742px;top:62px;width:722px;height:470px;background:#2f2f2f"></div>
<div class="a" style="left:742px;top:532px;width:722px;height:1px;background:#474747"></div>
<div class="a" style="left:957px;top:172px;width:290px;height:250px;background:#222"></div>
<div class="a" style="left:964px;top:179px;width:79px;height:236px;background:#2f2f2f"></div>
<div class="a" style="left:1063px;top:179px;width:177px;height:236px;background:#2f2f2f"></div>
<div class="a" style="left:1082px;top:199px;width:78px;height:20px;background:#222"></div>
<div class="a" style="left:1101px;top:238px;width:98px;height:20px;background:#222"></div>
<div class="a" style="left:1101px;top:277px;width:98px;height:20px;background:#222"></div>
<div class="a" style="left:1101px;top:316px;width:98px;height:20px;background:#222"></div>
<div class="a" style="left:1082px;top:355px;width:78px;height:20px;background:#222"></div>
<!-- DEVTOOLS -->
<div class="a" style="left:742px;top:533px;width:722px;height:34px;background:#333333"></div>
<div class="t" style="left:761px;top:545.5px;font-size:12px;color:#9a9a9a">构建</div>
<div class="t" style="left:807px;top:545.5px;font-size:12px;color:#e2e2e2">调试器</div>
<div class="a" style="left:851px;top:541px;width:18px;height:18px;border-radius:9px;background:#4a4a4a"></div>
<div class="t" style="left:851px;top:545.5px;width:18px;text-align:center;font-size:11px;color:#f0f0f0">5</div>
<div class="a" style="left:806px;top:561px;width:63px;height:2px;background:#dcdcdc"></div>
<div class="t" style="left:890px;top:545.5px;font-size:12px;color:#9a9a9a">问题</div>
<div class="t" style="left:936px;top:545.5px;font-size:12px;color:#9a9a9a">输出</div>
<div class="t" style="left:982px;top:545.5px;font-size:12px;color:#9a9a9a">调试控制台</div>
<div class="t" style="left:1061px;top:545.5px;font-size:12px;color:#9a9a9a">终端</div>
<div class="t" style="left:1107px;top:545.5px;font-size:12px;color:#9a9a9a">代码质量</div>
<svg style="left:1408px;top:546px" width="12" height="7" viewBox="0 0 12 7"><path d="M0.8 6.2L6 1L11.2 6.2" fill="none" stroke="#d0d0d0" stroke-width="1.2"/></svg>
<svg style="left:1435px;top:545px" width="10" height="10" viewBox="0 0 10 10"><path d="M0.6 0.6L9.4 9.4M9.4 0.6L0.6 9.4" stroke="#d8d8d8" stroke-width="1.3"/></svg>

<div class="a" style="left:742px;top:567px;width:722px;height:26px;background:#292a2d"></div>
<svg style="left:751px;top:573px" width="16" height="15" viewBox="0 0 16 15"><path d="M5 13.2H1V1H13.2V5" fill="none" stroke="#9a9a9a" stroke-width="1.1"/><path d="M7 6.5L14.5 9.5L11.3 10.5L14.6 13.8L13.6 14.8L10.3 11.5L9.5 14.6Z" fill="#9a9a9a"/></svg>
<div class="a" style="left:776px;top:572px;width:1px;height:16px;background:#3f3f3f"></div>
<div class="a" style="left:783px;top:567px;width:54px;height:26px;background:#000"></div>
<div class="t" style="left:795px;top:575px;font-size:12px;color:#f2f2f2">Wxml</div>
<div class="t" style="left:849px;top:575px;font-size:12px;color:#d8d8d8">Console</div>
<div class="t" style="left:914px;top:575px;font-size:12px;color:#d8d8d8">Sources</div>
<div class="t" style="left:980px;top:575px;font-size:12px;color:#d8d8d8">Network</div>
<div class="t" style="left:1049px;top:575px;font-size:12px;color:#d8d8d8">Performance</div>
<div class="t" style="left:1139px;top:575px;font-size:12px;color:#d8d8d8">Memory</div>
<div class="t" style="left:1207px;top:575px;font-size:12px;color:#d8d8d8">AppData</div>
<svg style="left:1274px;top:576px" width="9" height="8" viewBox="0 0 9 8"><path d="M0.6 0.6L3.8 4L0.6 7.4M4.8 0.6L8 4L4.8 7.4" fill="none" stroke="#bbb" stroke-width="1.1"/></svg>
<svg style="left:1342px;top:575px" width="12" height="11" viewBox="0 0 12 11"><path d="M6 0.3L11.8 10.5H0.2Z" fill="#f4b400"/><path d="M6 3.6V7" stroke="#292a2d" stroke-width="1.3"/><circle cx="6" cy="8.6" r="0.75" fill="#292a2d"/></svg>
<div class="t" style="left:1357px;top:575px;font-size:12px;color:#e0e0e0">5</div>
<div class="a" style="left:1373px;top:572px;width:1px;height:16px;background:#3f3f3f"></div>
<svg style="left:1384px;top:572px" width="16" height="16" viewBox="0 0 16 16"><path fill="#8a8a8a" fill-rule="evenodd" d="M6.6 0.8H9.4L9.8 2.9 11.2 3.6 13 2.4 14.9 4.4 13.7 6.2 14.3 7.6 16 8V10L14.3 10.4 13.7 11.8 14.9 13.6 13 15.6 11.2 14.4 9.8 15.1 9.4 17H6.6L6.2 15.1 4.8 14.4 3 15.6 1.1 13.6 2.3 11.8 1.7 10.4 0 10V8L1.7 7.6 2.3 6.2 1.1 4.4 3 2.4 4.8 3.6 6.2 2.9Z M8 6.3A2.7 2.7 0 1 0 8 11.7 2.7 2.7 0 1 0 8 6.3Z" transform="translate(0,-1) scale(1,1)"/></svg>
<svg style="left:1418px;top:574px" width="4" height="14" viewBox="0 0 4 14"><circle cx="2" cy="1.6" r="1.5" fill="#8a8a8a"/><circle cx="2" cy="6.6" r="1.5" fill="#8a8a8a"/><circle cx="2" cy="11.6" r="1.5" fill="#8a8a8a"/></svg>
<svg style="left:1440px;top:573px" width="18" height="16" viewBox="0 0 18 16"><path d="M1 5.5V14.5H12.5" fill="none" stroke="#6e6e6e" stroke-width="1.8"/><rect x="4.3" y="1" width="12.5" height="9.5" fill="none" stroke="#6e6e6e" stroke-width="1.8"/></svg>
<div class="a" style="left:742px;top:593px;width:722px;height:1px;background:#3c3c3c"></div>

<!-- Composed toolbar + DOM -->
<div class="a" style="left:742px;top:594px;width:397px;height:26px;background:#292a2d"></div>
<div class="a" style="left:750px;top:601px;width:12px;height:12px;border:1px solid #7a7a7a;border-radius:2px;background:#303030"></div>
<div class="t" style="left:768px;top:602px;font-size:12px;color:#e0e0e0">Composed</div>
<div class="a" style="left:834px;top:599px;width:1px;height:19px;background:#3f3f3f"></div>
<div class="a" style="left:742px;top:620px;width:397px;height:1px;background:#474747"></div>
<div class="a" style="left:742px;top:621px;width:397px;height:151px;background:#242424"></div>
<div class="t" style="left:756px;top:628px;font-size:10.9px;color:#5db0d7;font-family:Liberation Mono,monospace">&lt;pages/index/index&gt;</div>
<svg style="left:759px;top:646px" width="5" height="7"><path d="M0 0V7L5 3.5Z" fill="#999"/></svg>
<div class="t" style="left:767px;top:645px;font-size:10.9px;color:#e8e8e8;font-family:Liberation Mono,monospace">#shadow-root</div>
<div class="t" style="left:756px;top:662px;font-size:10.9px;color:#5db0d7;font-family:Liberation Mono,monospace">&lt;/pages/index/index&gt;</div>
<div class="a" style="left:742px;top:750px;width:397px;height:1px;background:#4a4a4a"></div>
<div class="a" style="left:1139px;top:594px;width:1px;height:178px;background:#4a4a4a"></div>

<!-- Styles pane -->
<div class="a" style="left:1140px;top:594px;width:324px;height:26px;background:#292a2d"></div>
<div class="a" style="left:1140px;top:594px;width:50px;height:26px;background:#000"></div>
<div class="t" style="left:1149px;top:602px;font-size:12px;color:#f2f2f2">Styles</div>
<div class="t" style="left:1199px;top:602px;font-size:12px;color:#d8d8d8">Computed</div>
<div class="t" style="left:1276px;top:602px;font-size:12px;color:#d8d8d8">Dataset</div>
<div class="t" style="left:1335px;top:602px;font-size:12px;color:#d8d8d8">Component Data</div>
<div class="a" style="left:1140px;top:620px;width:324px;height:1px;background:#474747"></div>
<div class="a" style="left:1140px;top:621px;width:324px;height:27px;background:#28292b"></div>
<div class="a" style="left:1141px;top:624px;width:252px;height:20px;background:#222222"></div>
<div class="t" style="left:1147px;top:628px;font-size:12px;color:#8a8a8a">Filter</div>
<div class="t" style="left:1403px;top:628px;font-size:12px;color:#f0f0f0;font-family:Liberation Mono,monospace;font-weight:bold;letter-spacing:-0.5px">.cls</div>
<svg style="left:1443px;top:629px" width="11" height="11" viewBox="0 0 11 11"><path d="M5.5 0V11M0 5.5H11" stroke="#6a6a6a" stroke-width="1.3"/></svg>
<svg style="left:1453px;top:638px" width="6" height="6"><path d="M6 0V6H0Z" fill="#6a6a6a"/></svg>
<div class="a" style="left:1140px;top:648px;width:324px;height:124px;background:#242424"></div>
<div class="a" style="left:1463px;top:533px;width:1px;height:239px;background:#1e1e1e"></div>
</body></html>
